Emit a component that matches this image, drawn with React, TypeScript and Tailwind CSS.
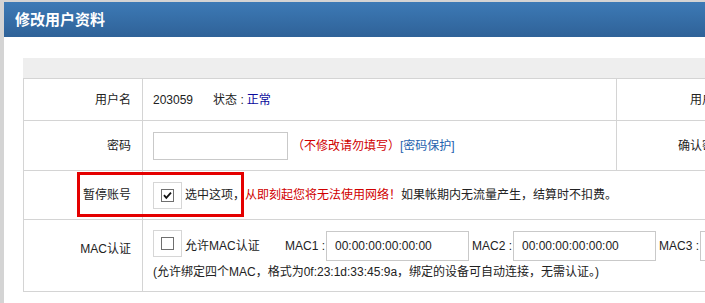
import React from 'react';

const font = { fontFamily: '"Liberation Sans", "Noto Sans CJK SC", sans-serif' };

function CheckBox({ checked }: { checked?: boolean }) {
  return (
    <span className="flex h-[27px] w-[29px] shrink-0 items-start justify-center border border-[#d6d6d6] bg-white pt-[6px]">
      <svg width="13" height="13" viewBox="0 0 13 13">
        <rect x="0.5" y="0.5" width="12" height="12" fill="#fff" stroke="#6f6f6f" />
        {checked && <path d="M3 6.2 L5.3 8.8 L10 3.6" fill="none" stroke="#111" strokeWidth="1.8" />}
      </svg>
    </span>
  );
}

function MacInput() {
  return (
    <span className="mt-px flex h-[30px] w-[143px] shrink-0 items-center border border-[#c9c9c9] bg-white pl-[8px] text-[#222]">
      00:00:00:00:00:00
    </span>
  );
}

export default function App() {
  return (
    <div className="h-[303px] w-[705px] overflow-hidden bg-[#d4d4d4] pl-[4px] pt-[2px] text-[12px] text-[#222]" style={font}>
      <div className="h-full w-[1000px] bg-white">
        <div className="flex h-[35px] items-center bg-linear-to-b from-[#3d7ab6] to-[#2f6298] pl-[11px]">
          <span className="text-[15px] font-bold text-white" style={{ fontFamily: '"Noto Sans CJK SC", sans-serif' }}>
            修改用户资料
          </span>
        </div>

        <div className="pl-[19px] pt-[21px]">
          <div className="h-[20px] bg-[#eeeeee]" />
          <div className="border-l border-t border-[#d4d4d4]">
            {/* 用户名 */}
            <div className="flex h-[42px] border-b border-[#d4d4d4]">
              <div className="flex w-[119px] items-center justify-end border-r border-[#d4d4d4] pr-[11px]">用户名</div>
              <div className="flex w-[474px] items-center border-r border-[#d4d4d4] pl-[10px]">
                <span>203059</span>
                <span className="ml-[20px]">状态 : </span>
                <span className="ml-[3px] text-[#0a0a9c]">正常</span>
              </div>
              <div className="flex w-[120px] items-center justify-end pr-[11px]">用户名</div>
              <div className="flex-1" />
            </div>

            {/* 密码 */}
            <div className="flex h-[50px] border-b border-[#d4d4d4]">
              <div className="flex w-[119px] items-center justify-end border-r border-[#d4d4d4] pr-[11px]">密码</div>
              <div className="flex w-[474px] items-center border-r border-[#d4d4d4] pl-[10px]">
                <span className="h-[28px] w-[135px] border border-[#c9c9c9] bg-white" />
                <span className="ml-[4px] text-[#d00000]">（不修改请勿填写）</span>
                <span className="text-[#1f62ad]">[密码保护]</span>
              </div>
              <div className="flex w-[120px] items-center justify-end pr-[11px]">确认密码</div>
              <div className="flex-1" />
            </div>

            {/* 暂停账号 */}
            <div className="relative flex h-[49px] border-b border-[#d4d4d4]">
              <div className="flex w-[119px] items-center justify-end border-r border-[#d4d4d4] pr-[11px]">暂停账号</div>
              <div className="flex flex-1 items-center pl-[10px]">
                <CheckBox checked />
                <span className="ml-[3px]">选中这项，</span>
                <span className="text-[#d00000]">从即刻起您将无法使用网络！</span>
                <span>如果帐期内无流量产生，结算时不扣费。</span>
              </div>
              <div className="absolute left-[53px] top-px h-[45px] w-[167px] border-[3px] border-[#e40000]" />
            </div>

            {/* MAC认证 */}
            <div className="flex h-[72px] border-b border-[#d4d4d4]">
              <div className="flex w-[119px] items-start justify-end border-r border-[#d4d4d4] pr-[11px] pt-[20px]">MAC认证</div>
              <div className="flex flex-1 flex-col pl-[10px] pt-[10px]">
                <div className="flex h-[31px] items-start">
                  <CheckBox />
                  <span className="w-[103px] pl-[3px] leading-[32px]">允许MAC认证</span>
                  <span className="w-[41px] leading-[32px]">MAC1 :</span>
                  <MacInput />
                  <span className="w-[44px] pl-[3px] leading-[32px]">MAC2 :</span>
                  <MacInput />
                  <span className="w-[44px] pl-[3px] leading-[32px]">MAC3 :</span>
                  <MacInput />
                </div>
                <div className="mt-[3px] leading-[16px]">
                  (允许绑定四个MAC，格式为0f:23:1d:33:45:9a，绑定的设备可自动连接，无需认证。)
                </div>
              </div>
            </div>
          </div>
        </div>
      </div>
    </div>
  );
}
